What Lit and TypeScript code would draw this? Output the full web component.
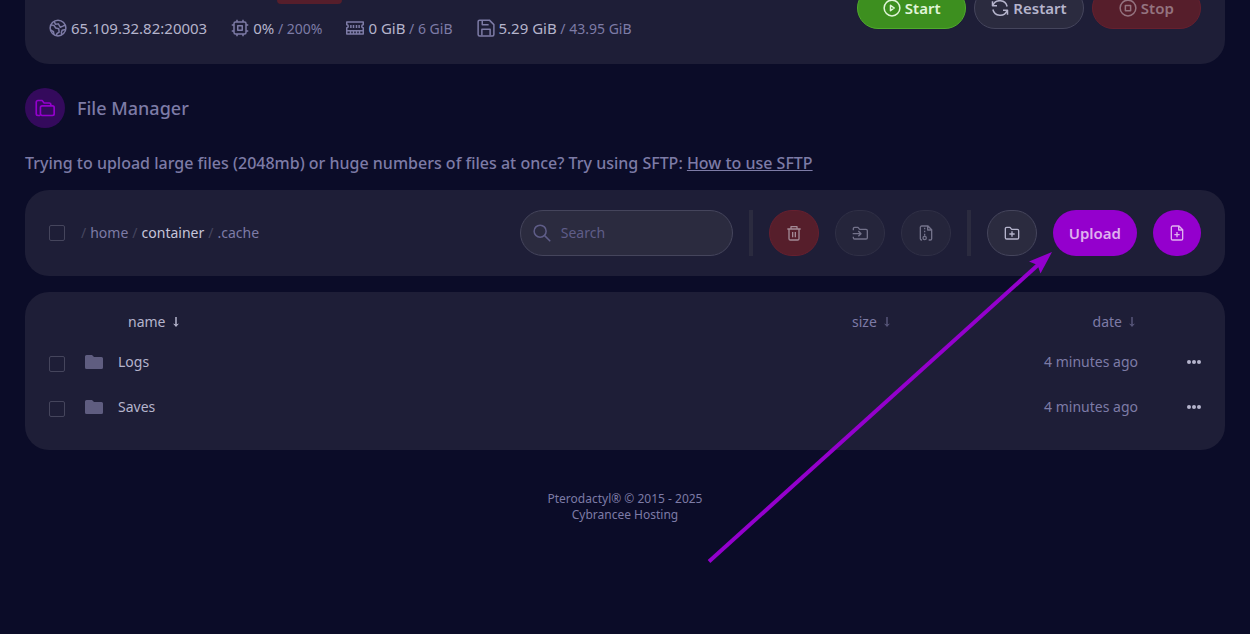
import { LitElement, html, css, svg, nothing } from "lit";
import { customElement, property } from "lit/decorators.js";

const icons: Record<string, unknown> = {
  globe: svg`<circle cx="12" cy="12" r="10.500"/><path d="M2.500 8l4 .5L9 12l4 1 .5 4.500-3 2-.5 3"/><path d="M7 3l1.500 4 4-.5L15 11l3.500-1.500L21.500 8M2 14.500l4 2.500 .5 3.500M22 14l-4.500 1-1 3 .5 3"/>`,
  cpu: svg`<rect x="4" y="4" width="16" height="16" rx="2"/><rect x="9" y="9" width="6" height="6"/><path d="M8 4V1M16 4V1M8 23v-3M16 23v-3M4 8H1M4 16H1M23 8h-3M23 16h-3"/>`,
  ram: svg`<path d="M1 4h22v3.500a2 2 0 0 0 0 4V20H1v-8.500a2 2 0 0 0 0-4z"/><path d="M6.500 8v4M10 8v4M14 8v4M17.500 8v4M1 15.500h22M6 16v4M10 16v4M14 16v4M18 16v4"/>`,
  disk: svg`<path d="M3.500 1.500h13L22.500 7.500V20.500a2 2 0 0 1-2 2h-17a2 2 0 0 1-2-2V3.500a2 2 0 0 1 2-2z"/><path d="M6.500 22v-8.500h11V22M7 2v5.500h8.500"/>`,
  play: svg`<circle cx="12" cy="12" r="10.500"/><path d="M10 8.500v7l5-3.500z"/>`,
  restart: svg`<path d="M2 3v6h6M22 21v-6h-6"/><path d="M2.500 8.500A10 10 0 0 1 21.500 10M21.500 15.500A10 10 0 0 1 2.500 14"/>`,
  stop: svg`<circle cx="12" cy="12" r="10.500"/><rect x="8.500" y="8.500" width="7" height="7"/>`,
  folders: svg`<path d="M6 21H3.500a2 2 0 0 1-2-2v-14a2 2 0 0 1 2-2H8.500L11 6h6a2 2 0 0 1 2 2v1.500"/><rect x="6.500" y="9.500" width="16.500" height="11.500" rx="2"/>`,
  search: svg`<circle cx="9.500" cy="9.500" r="8"/><path d="M15.500 15.500l7.500 7.500"/>`,
  trash: svg`<path d="M2 6h20M7.500 6V2.500h9V6M4.500 6v14.500a2 2 0 0 0 2 2h11a2 2 0 0 0 2-2V6M10 10.500v8M14 10.500v8"/>`,
  move: svg`<path d="M2 8V5.500a2 2 0 0 1 2-2h5L11.500 6.500H21a2 2 0 0 1 2 2V19a2 2 0 0 1-2 2H4a2 2 0 0 1-2-2v-1.500M1 13h12M9.500 9l4 4-4 4"/>`,
  zip: svg`<path d="M6 22.500H5.500a2 2 0 0 1-2-2v-17a2 2 0 0 1 2-2H15L20.500 7v13.500a2 2 0 0 1-2 2H16M14.500 2v5.500H20M10 4v2.500M10 8.500V11M10 13v3"/><circle cx="10" cy="19.500" r="2.500"/>`,
  newFolder: svg`<path d="M4 3.500h5L11.500 6.500H20a2 2 0 0 1 2 2V19a2 2 0 0 1-2 2H4a2 2 0 0 1-2-2V5.500a2 2 0 0 1 2-2zM12 9.500v8M8 13.500h8"/>`,
  newFile: svg`<path d="M5.500 1.500H15L20.500 7v13.500a2 2 0 0 1-2 2h-13a2 2 0 0 1-2-2v-17a2 2 0 0 1 2-2zM14.500 2v5.500H20M12 10.500v8M8 14.500h8"/>`,
};

@customElement("app-icon")
class AppIcon extends LitElement {
  @property() name = "";
  static styles = css`
    :host { display: block; width: 18px; height: 18px; flex: none; }
    svg { display: block; width: 100%; height: 100%; fill: none; stroke: currentColor; stroke-width: 2; overflow: visible; stroke-linejoin: round; }
  `;
  render() {
    return html`<svg viewBox="0 0 24 24" aria-hidden="true">${icons[this.name]}</svg>`;
  }
}

const stats = [
  { icon: "globe", value: "65.109.32.82:20003", limit: "" },
  { icon: "cpu", value: "0%", limit: "200%" },
  { icon: "ram", value: "0 GiB", limit: "6 GiB" },
  { icon: "disk", value: "5.29 GiB", limit: "43.95 GiB" },
];

const files = [
  { name: "Logs", date: "4 minutes ago" },
  { name: "Saves", date: "4 minutes ago" },
];

@customElement("app-root")
class AppRoot extends LitElement {
  static styles = css`
    :host {
      display: block; position: relative; box-sizing: border-box; min-height: 100vh; overflow: hidden;
      padding: 0 25px; background: #0b0c28; color: #7d7ba6;
      font: 14px/20px "Noto Sans", sans-serif;
    }
    * { box-sizing: border-box; }
    button, input { font: inherit; color: inherit; margin: 0; }
    a { color: inherit; text-decoration: none; }
    .card { background: #1e1e37; border-radius: 24px; }

    .server { display: flex; justify-content: space-between; align-items: flex-end; margin-top: -52px; padding: 24px; }
    .title { height: 32px; display: flex; padding-left: 228px; }
    .state { width: 65px; background: #561e2b; border-radius: 4px; }
    .stats { display: flex; gap: 24px; margin-top: 12px; }
    .stat { display: flex; align-items: center; gap: 4px; height: 24px; white-space: nowrap; }
    .stat app-icon { stroke-width: 2; }
    .value { color: #b5b4cc; font-size: 15px; }
    .power { display: grid; grid-auto-flow: column; grid-auto-columns: 1fr; gap: 8px; width: 344px; padding-bottom: 11px; }

    .btn {
      display: flex; align-items: center; justify-content: center; gap: 4px; height: 46px; padding: 0 16px;
      border: 1px solid #45455c; border-radius: 24px; background: #2b2b3f; color: #b5b4cc;
      font-size: 15px; font-weight: 600;
    }
    .power .btn { height: 42px; }
    .start { background: #3d8f1f; border-color: #4faa2c; color: #e0f5d8; }
    .stop { background: #561e2b; border-color: #66202f; color: #94737f; }
    .square { width: 50px; padding: 0; }
    .square app-icon { width: 16px; height: 16px; }
    .muted { background: #25253b; border-color: #303046; color: #73728a; }
    .danger { background: #561e2b; border-color: #66202f; color: #a38a96; }
    .primary { background: #9400cd; border: 0; color: #dfb0ee; }
    .create { width: 48px; }

    .heading { display: flex; align-items: center; gap: 12px; margin: 24px 0; }
    .badge { display: grid; place-items: center; width: 40px; height: 40px; border-radius: 50%; background: #340a5c; color: #9400cd; }
    .badge app-icon { width: 20px; height: 20px; }
    h1 { margin: 0; font-size: 18px; line-height: 24px; font-weight: 500; }
    .hint { margin: 0 0 15px; font-size: 16px; line-height: 23px; font-weight: 500; }
    .hint a { text-decoration: underline; }

    .toolbar { display: flex; align-items: center; gap: 16px; padding: 20px 24px; }
    .path { display: flex; flex: 1; gap: 4px; white-space: nowrap; }
    .slash { color: #45455e; }
    .current { color: #c6c5da; }
    .check { appearance: none; display: block; width: 16px; height: 16px; border: 1px solid #45455c; border-radius: 2px; }
    .search { display: flex; align-items: center; gap: 10px; width: 213px; height: 46px; padding: 0 12px; border: 1px solid #45455c; border-radius: 24px; background: #2b2b3f; color: #5f5d88; }
    .search input { flex: 1; min-width: 0; padding: 0; border: 0; outline: 0; background: none; }
    .search input::placeholder { color: #5f5d88; opacity: 1; }
    .rule { width: 4px; height: 46px; background: #2b2b3f; }

    .files { margin-top: 16px; padding: 20px 24px; }
    table { width: 100%; table-layout: fixed; border-collapse: collapse; }
    th, td { padding: 0; text-align: left; font-weight: 400; white-space: nowrap; }
    th { height: 28px; vertical-align: top; }
    td { height: 45px; padding-bottom: 2px; vertical-align: middle; }
    td.pick { padding: 2px 0 0; }
    .c-check { width: 36px; }
    .c-icon { width: 33px; }
    .c-col { width: 148px; }
    .c-menu { width: 63px; }
    .sort { display: inline-flex; align-items: center; gap: 6px; padding: 0; border: 0; background: none; }
    .sort svg { width: 8px; height: 12px; fill: none; stroke: currentColor; stroke-width: 1; opacity: .6; }
    .sort .head { fill: currentColor; stroke: none; }
    .inset { padding-left: 10px; }
    .active, .name { color: #b5b4cc; }
    .active svg { opacity: 1; }
    .right { text-align: right; }
    th.right { padding-right: 2px; }
    .folder { display: block; width: 18px; height: 14px; fill: #5f5d80; }
    .more { display: block; margin-left: auto; padding: 0; border: 0; background: none; color: #b5b4cc; }
    .more svg { display: block; width: 14px; height: 6px; fill: currentColor; }

    footer { margin-top: 41px; text-align: center; font-size: 12px; line-height: 16px; }
    .pointer { position: absolute; left: 0; top: 0; width: 1250px; height: 634px; pointer-events: none; fill: #9400cd; stroke: none; }
    .shaft { stroke: #9400cd; stroke-width: 4; }
  `;

  private sort(label: string, active = false) {
    return html`<button class="sort ${active ? "active" : ""}">${label}
      <svg viewBox="0 0 8 12" aria-hidden="true"><path d="M4 1v8" stroke-width="1.500" /><path class="head" d="M1 7.500l3 1 3-1-3 3.500z" /></svg></button>`;
  }

  render() {
    return html`
      <header class="card server">
        <div>
          <div class="title"><span class="state"></span></div>
          <div class="stats">
            ${stats.map((s) => html`<div class="stat"><app-icon name=${s.icon}></app-icon>
              <span><span class="value">${s.value}</span>${s.limit ? html` / ${s.limit}` : nothing}</span></div>`)}
          </div>
        </div>
        <div class="power">
          <button class="btn start"><app-icon name="play"></app-icon>Start</button>
          <button class="btn"><app-icon name="restart"></app-icon>Restart</button>
          <button class="btn stop"><app-icon name="stop"></app-icon>Stop</button>
        </div>
      </header>

      <div class="heading"><span class="badge"><app-icon name="folders"></app-icon></span><h1>File Manager</h1></div>
      <p class="hint">Trying to upload large files (2048mb) or huge numbers of files at once? Try using SFTP: <a href="#sftp">How to use SFTP</a></p>

      <section class="card toolbar">
        <input class="check" type="checkbox" aria-label="Select all" />
        <nav class="path">
          <span class="slash">/</span><a href="#home">home</a><span class="slash">/</span><a class="current" href="#container">container</a><span class="slash">/</span><span>.cache</span>
        </nav>
        <label class="search"><app-icon name="search"></app-icon><input type="text" placeholder="Search" aria-label="Search" /></label>
        <span class="rule"></span>
        <button class="btn square danger" aria-label="Delete"><app-icon name="trash"></app-icon></button>
        <button class="btn square muted" aria-label="Move"><app-icon name="move"></app-icon></button>
        <button class="btn square muted" aria-label="Archive"><app-icon name="zip"></app-icon></button>
        <span class="rule"></span>
        <button class="btn square" aria-label="New folder"><app-icon name="newFolder"></app-icon></button>
        <button class="btn primary">Upload</button>
        <button class="btn square primary create" aria-label="New file"><app-icon name="newFile"></app-icon></button>
      </section>

      <section class="card files">
        <table>
          <colgroup><col class="c-check" /><col class="c-icon" /><col /><col class="c-col" /><col class="c-col" /><col class="c-menu" /></colgroup>
          <thead>
            <tr><th></th><th></th><th class="inset">${this.sort("name", true)}</th><th class="inset">${this.sort("size")}</th><th class="right">${this.sort("date")}</th><th></th></tr>
          </thead>
          <tbody>
            ${files.map((f) => html`<tr>
              <td class="pick"><input class="check" type="checkbox" aria-label=${"Select " + f.name} /></td>
              <td><svg class="folder" viewBox="0 0 18 14" aria-hidden="true"><path d="M1.500 0H7l2 2h7.500A1.500 1.500 0 0 1 18 3.500v9a1.500 1.500 0 0 1-1.500 1.500h-15A1.500 1.500 0 0 1 0 12.500v-11A1.500 1.500 0 0 1 1.500 0z" /></svg></td>
              <td><a class="name" href=${"#" + f.name}>${f.name}</a></td>
              <td></td>
              <td class="right">${f.date}</td>
              <td><button class="more" aria-label="More"><svg viewBox="0 0 14 6"><circle cx="2" cy="3" r="2" /><circle cx="7" cy="3" r="2" /><circle cx="12" cy="3" r="2" /></svg></button></td>
            </tr>`)}
          </tbody>
        </table>
      </section>

      <footer>Pterodactyl® © 2015 - 2025<br />Cybrancee Hosting</footer>

      <svg class="pointer" viewBox="0 0 1250 634" aria-hidden="true">
        <path class="shaft" d="M709 561.500L1039 264" />
        <path d="M1052 252l-23 9.500 8.500 3.500 3 8.500z" />
      </svg>
    `;
  }
}
